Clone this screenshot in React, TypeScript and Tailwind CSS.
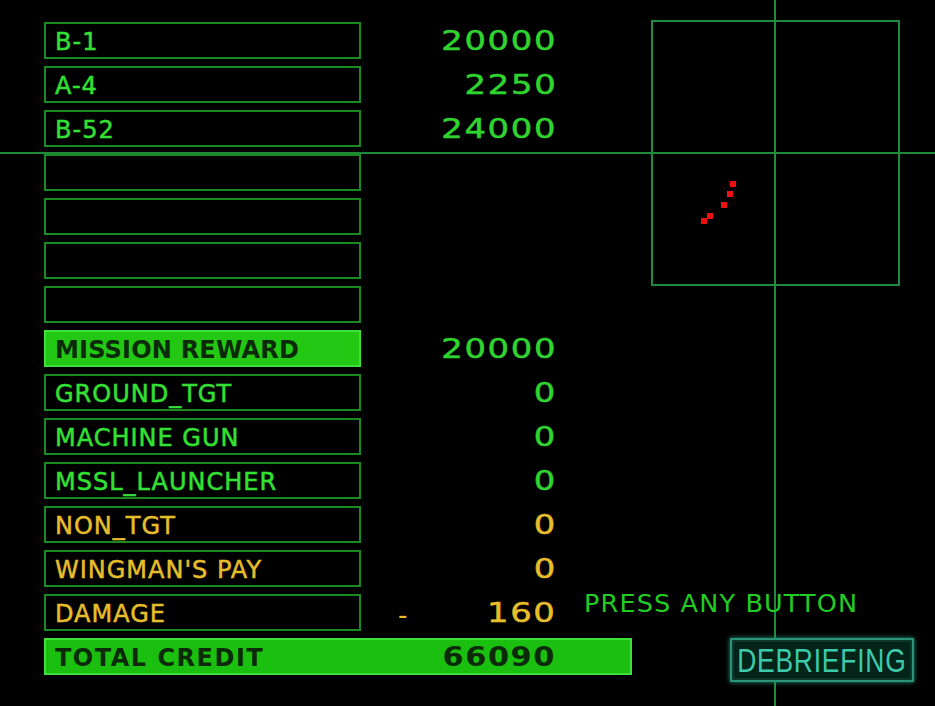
import React from 'react';

type Row = {
  label?: string;
  value?: string;
  tone?: 'green' | 'yellow' | 'hi';
};

const rows: Row[] = [
  { label: 'B-1', value: '20000' },
  { label: 'A-4', value: '2250' },
  { label: 'B-52', value: '24000' },
  {},
  {},
  {},
  {},
  { label: 'MISSION REWARD', value: '20000', tone: 'hi' },
  { label: 'GROUND_TGT', value: '0' },
  { label: 'MACHINE GUN', value: '0' },
  { label: 'MSSL_LAUNCHER', value: '0' },
  { label: 'NON_TGT', value: '0', tone: 'yellow' },
  { label: "WINGMAN'S PAY", value: '0', tone: 'yellow' },
];

// radar blips, page coordinates
const blips = [
  [730, 181],
  [727, 191],
  [721, 202],
  [707, 213],
  [701, 218],
];

const sans = "font-['DejaVu_Sans','Liberation_Sans',sans-serif]";
const heavy = '[-webkit-text-stroke:0.5px_currentColor]';

const LabelBox: React.FC<{ row: Row }> = ({ row }) => {
  const hi = row.tone === 'hi';
  return (
    <div
      className={`flex h-[37px] w-[317px] items-center border-2 pl-[9px] ${
        hi ? 'border-[#3ee03a] bg-[#22c814]' : 'border-[#1a8a1e] bg-black'
      }`}
    >
      <span
        className={`${sans} pt-[2px] text-[24px] leading-none ${
          hi
            ? 'font-bold tracking-[0.2px] text-[#0a2a08]'
            : row.tone === 'yellow'
              ? `${heavy} tracking-[1px] text-[#e6bd2a]`
              : `${heavy} tracking-[1px] text-[#33e033]`
        }`}
      >
        {row.label}
      </span>
    </div>
  );
};

// wide digits, right edge kept at the column end
const Digits: React.FC<{ text?: string; className: string }> = ({ text, className }) => (
  <span
    className={`${sans} inline-block origin-right pt-[2px] text-[26px] leading-none tracking-[1.3px] ${className}`}
  >
    {text}
  </span>
);

const Value: React.FC<{ text?: string; tone?: Row['tone'] }> = ({ text, tone }) => (
  <div className="w-[196px] text-right">
    <Digits
      text={text}
      className={`${heavy} scale-x-[1.3] ${tone === 'yellow' ? 'text-[#e6bd2a]' : 'text-[#2fd42f]'}`}
    />
  </div>
);

export default function App() {
  return (
    <div className="relative h-[706px] w-[935px] overflow-hidden bg-black">
      {/* radar frame and crosshair */}
      <div className="absolute left-[651px] top-[20px] h-[266px] w-[249px] border-2 border-[#1f8a3c]" />
      <div className="absolute left-0 top-[152px] h-[2px] w-[935px] bg-[#1f8a3c]" />
      <div className="absolute left-[774px] top-0 h-[706px] w-[2px] bg-[#1f8a3c]" />
      {blips.map(([x, y], i) => (
        <div
          key={i}
          className="absolute h-[6px] w-[6px] bg-[#ee1010]"
          style={{ left: x, top: y }}
        />
      ))}

      <div className="relative flex flex-col gap-[7px] pl-[44px] pt-[22px]">
        {rows.map((row, i) => (
          <div key={i} className="flex h-[37px] items-center">
            <LabelBox row={row} />
            <Value text={row.value} tone={row.tone} />
          </div>
        ))}

        <div className="flex h-[37px] items-center">
          <LabelBox row={{ label: 'DAMAGE', tone: 'yellow' }} />
          <div className="relative">
            <span className={`${sans} absolute left-[37px] top-[-2px] text-[26px] text-[#e6bd2a]`}>-</span>
            <Value text="160" tone="yellow" />
          </div>
          <span className={`${sans} ml-[27px] -mt-[18px] text-[25.5px] leading-none tracking-[1.15px] text-[#22cc22]`}>
            PRESS ANY BUTTON
          </span>
        </div>

        <div className="flex h-[37px] items-start">
          <div className="flex h-[37px] w-[588px] items-center border-2 border-[#3ee03a] bg-[#1abf10] pl-[9px]">
            <span className={`${sans} w-[301px] pt-[2px] text-[24px] font-bold leading-none tracking-[1.5px] text-[#0a2a08]`}>
              TOTAL CREDIT
            </span>
            <div className="w-[200px] text-right">
              <Digits text="66090" className="scale-x-[1.17] font-bold text-[#0a2a08]" />
            </div>
          </div>
          <div className="ml-[98px] flex h-[44px] w-[184px] items-center justify-center border-2 border-[#2a9478] bg-[#04241a] shadow-[0_0_5px_#2a9478,inset_0_0_0_2px_#0b3a2c]">
            <span className="inline-block scale-x-[0.8] font-['Liberation_Sans',sans-serif] text-[33px] leading-none tracking-[1px] text-[#3ccbaa]">
              DEBRIEFING
            </span>
          </div>
        </div>
      </div>
    </div>
  );
}
